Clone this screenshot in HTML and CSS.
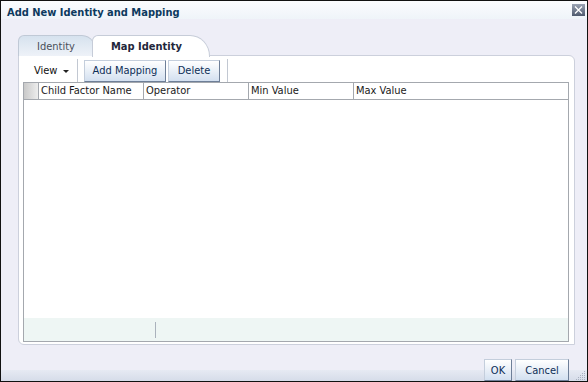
FILE: index.html
```html
<!DOCTYPE html>
<html lang="en">
<head>
    <meta charset="UTF-8">
    <title>Add New Identity and Mapping</title>
    <link rel="stylesheet" href="styles.css">
</head>
<body>
    <div class="dialog">
        <div class="titlebar">
            <span class="title">Add New Identity and Mapping</span>
            <span class="close">
                <svg width="13" height="12" viewBox="0 0 13 12">
                    <defs>
                        <linearGradient id="cg" x1="0" y1="0" x2="0" y2="1">
                            <stop offset="0" stop-color="#9aa3b3"/>
                            <stop offset="1" stop-color="#4f5a6e"/>
                        </linearGradient>
                    </defs>
                    <rect x="0" y="0" width="13" height="12" fill="url(#cg)"/>
                    <path d="M3 2.5 L10 9.5 M10 2.5 L3 9.5" stroke="#fff" stroke-width="1.3"/>
                </svg>
            </span>
        </div>
        <div class="content">
            <div class="tabs">
                <div class="tab">Identity</div>
                <div class="tab active">Map Identity</div>
            </div>
            <div class="panel">
                <div class="toolbar">
                    <span class="menu">View <span class="arrow"></span></span>
                    <span class="sep"></span>
                    <button class="btn add">Add Mapping</button>
                    <button class="btn del">Delete</button>
                    <span class="sep"></span>
                </div>
                <div class="table">
                    <div class="thead">
                        <div class="th sel"></div>
                        <div class="th col">Child Factor Name</div>
                        <div class="th col">Operator</div>
                        <div class="th col">Min Value</div>
                        <div class="th last">Max Value</div>
                    </div>
                    <div class="tbody"></div>
                    <div class="tfoot"><span class="fsep"></span></div>
                </div>
            </div>
        </div>
        <div class="actions">
            <button class="btn ok">OK</button>
            <button class="btn cancel">Cancel</button>
            <span class="grip">
                <svg width="11" height="11" viewBox="0 0 11 11" fill="#a8b0bf">
                    <rect x="9" y="1" width="1" height="1"/>
                    <rect x="7" y="3" width="1" height="1"/><rect x="9" y="3" width="1" height="1"/>
                    <rect x="5" y="5" width="1" height="1"/><rect x="7" y="5" width="1" height="1"/><rect x="9" y="5" width="1" height="1"/>
                    <rect x="3" y="7" width="1" height="1"/><rect x="5" y="7" width="1" height="1"/><rect x="7" y="7" width="1" height="1"/><rect x="9" y="7" width="1" height="1"/>
                    <rect x="1" y="9" width="1" height="1"/><rect x="3" y="9" width="1" height="1"/><rect x="5" y="9" width="1" height="1"/><rect x="7" y="9" width="1" height="1"/><rect x="9" y="9" width="1" height="1"/>
                </svg>
            </span>
        </div>
    </div>
</body>
</html>
```

FILE: styles.css
```css
body {
    margin: 0;
    font-family: "DejaVu Sans Condensed", "DejaVu Sans", sans-serif;
    font-size: 11px;
}
.dialog {
    position: relative;
    width: 588px;
    height: 382px;
    box-sizing: border-box;
    border: 1px solid #111;
    background: #eeeef7;
    display: flex;
    flex-direction: column;
}
.titlebar {
    height: 18px;
    display: flex;
    align-items: flex-start;
    justify-content: space-between;
    background: linear-gradient(#fbfcfe, #eff4f9);
    padding: 0 2px 0 6px;
}
.title {
    font-weight: bold;
    font-size: 11px;
    color: #0d3a5e;
    line-height: 14px;
    margin-top: 5px;
}
.close {
    margin-top: 3px;
    height: 12px;
    line-height: 0;
}
.content {
    padding: 16px 12px 0 17px;
}
.tabs {
    display: flex;
    height: 21px;
    margin-bottom: -1px;
    position: relative;
    z-index: 1;
}
.tab {
    box-sizing: border-box;
    height: 21px;
    padding: 4px 0 0 18px;
    width: 80px;
    color: #4a4f5a;
    background: linear-gradient(#d6e2ee, #eef2f8);
    border: 1px solid #c0c9d6;
    border-bottom: none;
    border-radius: 6px 16px 0 0 / 6px 21px 0 0;
}
.tab.active {
    width: 118px;
    margin-left: -6px;
    color: #22263a;
    font-weight: bold;
    background: #fff;
    border-color: #c6ccd8;
    border-radius: 6px 20px 0 0 / 6px 21px 0 0;
    height: 22px;
}
.panel {
    height: 290px;
    box-sizing: border-box;
    background: #fff;
    border: 1px solid #ccd0dc;
    border-radius: 0 6px 0 6px;
    padding: 3px 5px 2px 4px;
    display: flex;
    flex-direction: column;
}
.toolbar {
    height: 23px;
    display: flex;
    align-items: center;
}
.menu {
    margin-left: 11px;
    color: #111;
    width: 43px;
    white-space: nowrap;
}
.arrow {
    display: inline-block;
    width: 0;
    height: 0;
    border-left: 3px solid transparent;
    border-right: 3px solid transparent;
    border-top: 3px solid #222;
    vertical-align: middle;
    margin-left: 2px;
}
.sep {
    width: 1px;
    height: 23px;
    background: #c2c8d2;
    margin: 0 6px 0 0;
}
.btn {
    box-sizing: border-box;
    height: 22px;
    padding: 0;
    font: inherit;
    color: #0d2e57;
    background: linear-gradient(#ffffff, #d3e0f0);
    border: 1px solid;
    border-color: #c4cedc #6e7f98 #6e7f98 #c4cedc;
}
.add {
    width: 82px;
    margin-right: 2px;
}
.del {
    width: 52px;
    margin-right: 7px;
}
.table {
    height: 260px;
    box-sizing: border-box;
    border: 1px solid #a4a8ae;
    display: flex;
    flex-direction: column;
}
.thead {
    display: flex;
    height: 17px;
    box-sizing: border-box;
    border-bottom: 1px solid #a4a8ae;
}
.th {
    box-sizing: border-box;
    border-right: 1px solid #a4a8ae;
    padding: 1px 0 0 2px;
    color: #1a1a1a;
    white-space: nowrap;
}
.sel {
    width: 15px;
    background: linear-gradient(to right, #c9c9c9, #ededed);
}
.col {
    width: 105px;
}
.last {
    flex: 1;
    border-right: none;
}
.tbody {
    flex: 1;
}
.tfoot {
    height: 23px;
    background: #eef6f4;
    display: flex;
    align-items: center;
}
.fsep {
    width: 1px;
    height: 16px;
    background: #aab2bc;
    margin-left: 131px;
}
.actions {
    flex: 1;
    display: flex;
    align-items: flex-end;
    justify-content: flex-end;
    padding-right: 18px;
    background: linear-gradient(#eeeef7 25px, #e6eaf3 25px, #d6dce9);
}
.ok {
    width: 28px;
    margin-right: 3px;
}
.cancel {
    width: 54px;
}
.grip {
    position: absolute;
    right: 1px;
    bottom: 0;
    line-height: 0;
}
```
